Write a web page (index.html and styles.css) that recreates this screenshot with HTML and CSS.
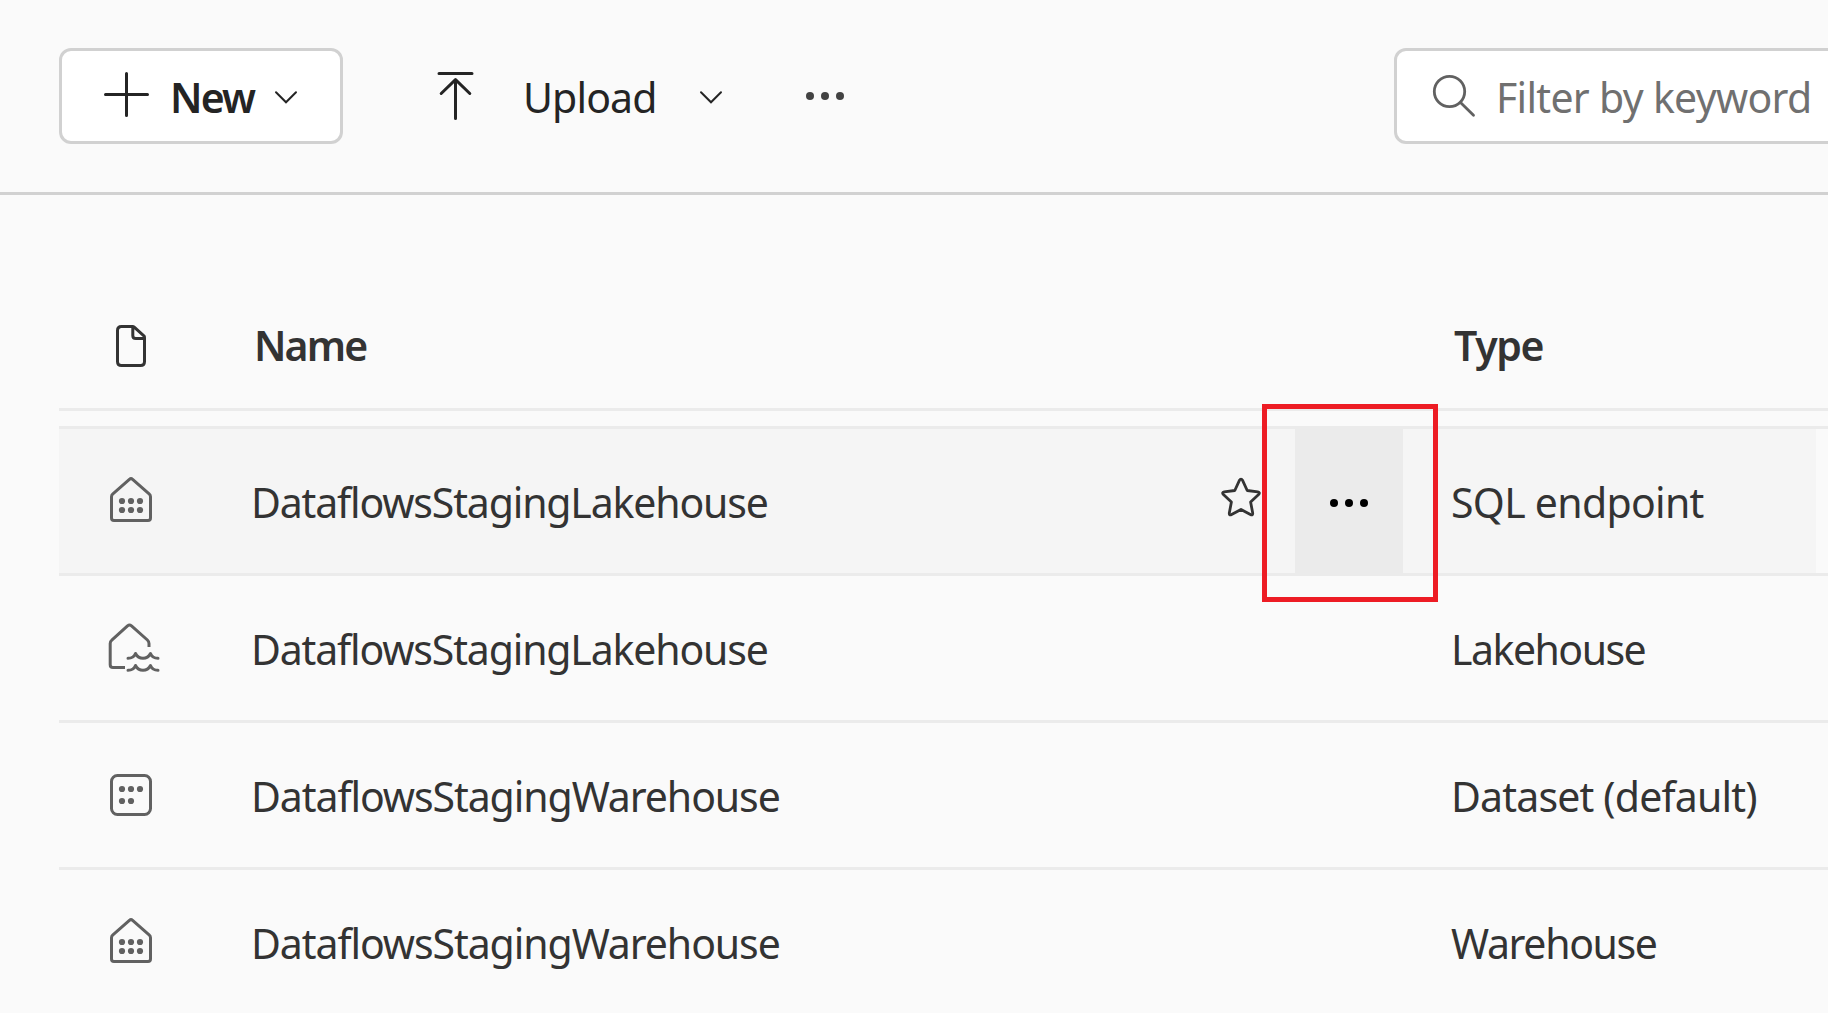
FILE: index.html
```html
<!DOCTYPE html>
<html lang="en">
<head>
<meta charset="utf-8">
<title>Workspace items</title>
<link rel="stylesheet" href="styles.css">
</head>
<body>
<svg width="0" height="0" class="symbols" aria-hidden="true">
  <symbol id="warehouse" viewBox="0 0 60 60">
    <path d="M10.5 25.8Q10.5 24 11.9 22.8L28.4 8.3Q30 6.900 31.600 8.3L48.100 22.8Q49.500 24 49.500 25.8V47Q49.500 49.500 47 49.500H13Q10.500 49.500 10.500 47Z" fill="none" stroke="currentColor" stroke-width="3"/>
    <g fill="currentColor"><circle cx="21" cy="30" r="3.100"/><circle cx="30" cy="30" r="3.100"/><circle cx="39" cy="30" r="3.100"/><circle cx="21" cy="39" r="3.100"/><circle cx="30" cy="39" r="3.100"/><circle cx="39" cy="39" r="3.100"/></g>
  </symbol>
  <symbol id="chevron" viewBox="0 0 24 14">
    <path d="M2 2.200 12 12.300 22 2.200" fill="none" stroke="currentColor" stroke-width="2" stroke-linecap="round"/>
  </symbol>
  <symbol id="dots" viewBox="0 0 40 10">
    <g fill="currentColor"><circle cx="5" cy="5" r="4"/><circle cx="20" cy="5" r="4"/><circle cx="35" cy="5" r="4"/></g>
  </symbol>
</svg>

<header class="toolbar">
  <button class="btn btn-new">
    <svg class="plus" viewBox="0 0 45 45"><path d="M22.500 1.500V43.500M1.500 22.500H43.500" stroke="currentColor" stroke-width="3" stroke-linecap="round"/></svg>
    <span class="label-new">New</span>
    <svg class="chevron"><use href="#chevron"/></svg>
  </button>
  <button class="btn-upload">
    <svg class="upload" viewBox="0 0 37 48"><path d="M2 1.500H35M18.500 46.500V8M4.200 21.500 18.500 7.700 32.800 21.500" fill="none" stroke="currentColor" stroke-width="3" stroke-linecap="round" stroke-linejoin="round"/></svg>
    <span class="label-upload">Upload</span>
    <svg class="chevron"><use href="#chevron"/></svg>
  </button>
  <svg class="dots toolbar-more"><use href="#dots"/></svg>
  <div class="search">
    <svg class="magnifier" viewBox="0 0 44 44"><g fill="none" stroke="currentColor" stroke-width="2.800" stroke-linecap="round"><circle cx="17.500" cy="17.500" r="15.200"/><path d="M28.500 28.500 41.500 41.300"/></g></svg>
    <span class="placeholder">Filter by keyword</span>
  </div>
</header>

<main class="list">
  <div class="row head">
    <div class="icon"><svg class="item-icon" viewBox="0 0 60 60"><path d="M20.500 10.500H31.500Q32.500 10.500 33.500 11.400L43.200 20.200Q43.500 20.800 43.500 22V45.500Q43.500 49.500 39.500 49.500H20.500Q16.500 49.500 16.500 45.500V14.500Q16.500 10.500 20.500 10.500ZM31.800 11V19.500Q31.800 22.500 34.800 22.500H43.500" fill="none" stroke="currentColor" stroke-width="3"/></svg></div>
    <div class="name t-name">Name</div>
    <div class="type t-type">Type</div>
  </div>
  <div class="rows">
    <div class="row hovered">
      <div class="icon"><svg class="item-icon"><use href="#warehouse"/></svg></div>
      <div class="name t-name-lake">DataflowsStagingLakehouse</div>
      <div class="actions">
        <svg class="star" viewBox="0 0 42 42"><path d="M19.300 3.600Q21 .8 22.700 3.600L27.200 13.500 37.800 14.800Q40.500 15.400 38.600 17.500L30.600 25 32.700 36Q32.900 38.800 30.400 37.600L21 32.400 11.600 37.600Q9.100 38.800 9.300 36L11.400 25 3.400 17.500Q1.500 15.400 4.200 14.800L14.800 13.500Z" fill="none" stroke="currentColor" stroke-width="2.800" stroke-linejoin="round"/></svg>
        <button class="more"><svg class="dots"><use href="#dots"/></svg></button>
        <div class="callout"></div>
      </div>
      <div class="type t-sql">SQL endpoint</div>
    </div>
    <div class="row">
      <div class="icon"><svg class="item-icon" viewBox="0 0 60 60"><g fill="none" stroke="currentColor" stroke-width="3" stroke-linecap="round" stroke-linejoin="round"><path d="M24 49.500H12Q9.200 49.500 9.200 46.700V25.500Q9.200 23.500 10.800 22.200L26.500 7.800Q28.500 6.200 30.500 7.800L46.400 22Q48 23.500 48 25.500V29" stroke-linecap="butt"/><path d="M27 40.300Q32.500 40.300 34.500 35.500Q37 40.300 42 40.300Q47 40.300 49.500 35.500Q51.500 40.300 57 40.300"/><path d="M27 52.300Q32.500 52.300 34.500 47.500Q37 52.300 42 52.300Q47 52.300 49.500 47.500Q51.500 52.300 57 52.300"/></g></svg></div>
      <div class="name t-name-lake">DataflowsStagingLakehouse</div>
      <div class="type t-lake">Lakehouse</div>
    </div>
    <div class="row">
      <div class="icon"><svg class="item-icon" viewBox="0 0 60 60"><rect x="10.500" y="10.500" width="39" height="39" rx="6" fill="none" stroke="currentColor" stroke-width="3"/><g fill="currentColor"><circle cx="21" cy="24" r="3.100"/><circle cx="30" cy="24" r="3.100"/><circle cx="39" cy="24" r="3.100"/><circle cx="21" cy="36" r="3.100"/><circle cx="30" cy="36" r="3.100"/></g></svg></div>
      <div class="name t-name-ware">DataflowsStagingWarehouse</div>
      <div class="type t-dataset">Dataset (default)</div>
    </div>
    <div class="row">
      <div class="icon"><svg class="item-icon"><use href="#warehouse"/></svg></div>
      <div class="name t-name-ware">DataflowsStagingWarehouse</div>
      <div class="type t-ware">Warehouse</div>
    </div>
  </div>
</main>
</body>
</html>
```
FILE: styles.css
```css
* { box-sizing: border-box; }
body {
  margin: 0;
  height: 1013px;
  overflow: hidden;
  background: #fafafa;
  color: #333;
  font: 400 41px/56px "Noto Sans", "Open Sans", sans-serif;
  white-space: nowrap;
}
svg { display: block; flex: none; }
.symbols { position: absolute; }
button {
  margin: 0;
  padding: 0;
  border: 0;
  background: none;
  color: inherit;
  font: inherit;
  text-align: left;
}

.toolbar {
  display: flex;
  align-items: center;
  height: 195px;
  padding-left: 59px;
  border-bottom: 3px solid #d1d1d1;
  color: #242424;
}
.btn, .search {
  display: flex;
  align-items: center;
  flex: none;
  height: 96px;
  border: 3px solid #d1d1d1;
  border-radius: 12px;
  background: #fff;
}
.btn-new { width: 284px; padding-left: 42px; font-weight: 600; }
.plus { width: 45px; height: 45px; margin-top: -3px; }
.label-new { width: 104px; margin-left: 21px; padding-top: 1px; letter-spacing: -1.8px; }
.chevron { width: 24px; height: 14px; margin-top: 2px; }
.btn-upload { display: flex; align-items: center; width: 286px; margin-left: 94px; }
.upload { width: 37px; height: 48px; }
.label-upload { width: 176px; margin-left: 49px; padding-top: 1px; letter-spacing: -.87px; }
.dots { width: 40px; height: 10px; }
.toolbar-more { margin-left: 82px; color: #424242; }
.search { width: 480px; margin-left: 549px; padding-left: 35px; color: #616161; }
.magnifier { width: 44px; height: 44px; }
.placeholder { margin-left: 20px; padding-top: 1px; color: #707070; letter-spacing: -.7px; }

.list { padding: 87px 0 0 59px; }
.row {
  display: grid;
  grid-template-columns: 192px 970px 216px 1fr;
  align-items: center;
  height: 147px;
  border-bottom: 3px solid #ebebeb;
}
.head { height: 129px; font-weight: 600; }
.rows { margin-top: 15px; border-top: 3px solid #ebebeb; }
.icon { width: 144px; display: flex; justify-content: center; color: #616161; }
.head .icon { color: #333; padding-top: 2px; }
.item-icon { width: 60px; height: 60px; }
.name { padding-top: 2px; }
.type { grid-column: 4; padding: 2px 0 0 14px; }
.head .name { padding: 0 0 0 3px; }
.head .type { padding: 0 0 0 17px; }
.hovered {
  background: linear-gradient(#f5f5f5, #f5f5f5) left / 1757px 100% no-repeat;
}
.actions {
  position: relative;
  display: flex;
  align-items: center;
  grid-column: 3;
  height: 144px;
}
.star { width: 42px; height: 42px; margin: -6px 0 0 -1px; }
.more {
  display: flex;
  align-items: center;
  justify-content: center;
  width: 108px;
  height: 144px;
  margin-left: 33px;
  padding-top: 4px;
  background: #ebebeb;
  color: #000;
}
/* Highlight drawn over the row's overflow menu button. */
.callout {
  position: absolute;
  left: 41px;
  top: -25px;
  width: 176px;
  height: 198px;
  border: 5px solid #ed1c24;
}

/* Per-label tracking */
.t-name { letter-spacing: -1.9px; }
.t-type { letter-spacing: -1.37px; }
.t-name-lake { letter-spacing: -1.16px; }
.t-name-ware { letter-spacing: -1.08px; }
.t-sql { letter-spacing: -.7px; }
.t-lake { letter-spacing: -1.5px; }
.t-dataset { letter-spacing: -.83px; }
.t-ware { letter-spacing: -1.35px; }
```
